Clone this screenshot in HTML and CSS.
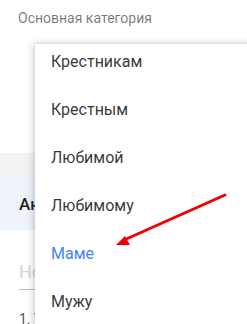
FILE: index.html
```html
<!DOCTYPE html>
<html lang="ru">
<head>
    <meta charset="UTF-8">
    <meta name="viewport" content="width=device-width, initial-scale=1.0">
    <title>Основная категория</title>
    <link rel="stylesheet" href="styles.css">
</head>
<body>
    <div class="page">
        <div class="field-label">Основная категория</div>
        <div class="field-space"></div>
        <div class="divider-band"></div>
        <div class="card-head">Анкета</div>
        <div class="form">
            <div class="input">Новое</div>
            <div class="list-item">1. Текст</div>
        </div>

        <div class="menu">
            <ul class="menu-list">
                <li class="menu-item">Крестникам</li>
                <li class="menu-item">Крестным</li>
                <li class="menu-item">Любимой</li>
                <li class="menu-item">Любимому</li>
                <li class="menu-item active">Маме</li>
                <li class="menu-item">Мужу</li>
                <li class="menu-item">Папе</li>
            </ul>
        </div>

        <svg class="arrow" width="247" height="324" viewBox="0 0 247 324">
            <line x1="225" y1="195" x2="124" y2="240" stroke="#f20000" stroke-width="3" stroke-linecap="round"/>
            <polygon points="116,245 125,236 130,245" fill="#f20000"/>
        </svg>
    </div>
</body>
</html>
```

FILE: styles.css
```css
body {
    margin: 0;
    padding: 0;
    font-family: Roboto, 'Noto Sans', sans-serif;
    background-color: #fff;
    color: rgba(0, 0, 0, 0.87);
}
.page {
    position: relative;
    width: 247px;
    height: 324px;
    overflow: hidden;
}
.field-label {
    padding: 10px 0 0 18px;
    font-size: 14px;
    line-height: 16px;
    color: rgba(0, 0, 0, 0.54);
    white-space: nowrap;
}
.field-space {
    height: 127px;
}
.divider-band {
    height: 22px;
    background-color: #f3f3f3;
}
.card-head {
    height: 55px;
    box-sizing: border-box;
    padding: 19px 0 0 19px;
    background-color: #eef3fc;
    font-size: 17px;
    line-height: 20px;
    font-weight: 500;
    color: #222;
    white-space: nowrap;
}
.form {
    padding: 31px 0 0 19px;
}
.input {
    font-size: 18px;
    line-height: 22px;
    color: #d6d6d6;
    padding-bottom: 6px;
    border-bottom: 1px solid #bdbdbd;
    white-space: nowrap;
}
.list-item {
    margin-top: 21px;
    font-size: 14px;
    line-height: 16px;
    color: #555;
    white-space: nowrap;
}
.menu {
    position: absolute;
    left: 35px;
    top: 44px;
    right: -20px;
    bottom: -20px;
    background-color: #fff;
    box-shadow: -2px 0 8px rgba(0, 0, 0, 0.18), 0 -1px 3px rgba(0, 0, 0, 0.06);
    overflow: hidden;
}
.menu-list {
    list-style: none;
    margin: -7px 0 0 0;
    padding: 0;
}
.menu-item {
    height: 48px;
    display: flex;
    align-items: center;
    padding-left: 16px;
    font-size: 16px;
    color: rgba(0, 0, 0, 0.8);
    white-space: nowrap;
}
.menu-item.active {
    color: #4285f4;
}
.arrow {
    position: absolute;
    left: 0;
    top: 0;
}
```
